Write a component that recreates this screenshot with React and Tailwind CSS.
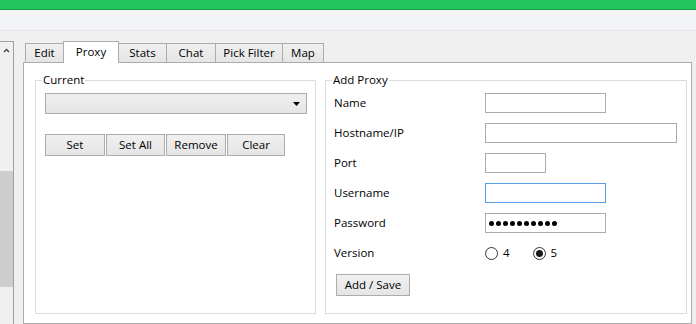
import { useState } from 'react'

const tabs = [
  { label: 'Edit', w: 'w-[39px]' },
  { label: 'Proxy', w: 'w-[56px]' },
  { label: 'Stats', w: 'w-[49px]' },
  { label: 'Chat', w: 'w-[50px]' },
  { label: 'Pick Filter', w: 'w-[68px]' },
  { label: 'Map', w: 'w-[42px]' },
]

const btn =
  'h-[22px] border border-[#acacac] bg-gradient-to-b from-[#f0f0f0] to-[#e5e5e5] flex items-center justify-center text-[11.5px] text-black'

function Field({ label, children }) {
  return (
    <div className="h-[20px] flex items-center pl-[8px]">
      <div className="w-[151px] text-[11.5px] text-black">{label}</div>
      {children}
    </div>
  )
}

function Radio({ checked, label }) {
  return (
    <div className="flex items-center">
      <span className="w-[13px] h-[13px] rounded-full border border-[#333] bg-white flex items-center justify-center">
        {checked && <span className="w-[7px] h-[7px] rounded-full bg-[#1a1a1a]" />}
      </span>
      <span className="ml-[5px] text-[11.5px] text-black">{label}</span>
    </div>
  )
}

export default function App() {
  const [active] = useState('Proxy')

  return (
    <div
      className="w-[696px] h-[324px] overflow-hidden bg-[#f0f0f0] flex flex-col"
      style={{ fontFamily: '"Open Sans", "Noto Sans", sans-serif' }}
    >
      <div className="h-[10px] shrink-0 bg-[#22c55e] border-b border-[#16a34a]" />
      <div className="h-[21px] shrink-0 bg-[#f3f4f6] border-b border-[#e5e7eb]" />

      <div className="flex flex-1 min-h-0">
        {/* scrollbar column */}
        <div className="w-[14px] mt-[10px] border-t border-r border-[#a0a0a0] flex flex-col">
          <div className="h-[17px] flex items-center pl-[3px]">
            <svg width="7" height="5" viewBox="0 0 7 5">
              <path d="M1 4 L3.5 1.5 L6 4" fill="none" stroke="#404040" strokeWidth="1.3" />
            </svg>
          </div>
          <div className="mt-[112px] h-[116px] w-[13px] bg-[#cdcdcd]" />
        </div>

        {/* tab control */}
        <div className="ml-[9px] mr-[4px] flex-1 flex flex-col pt-[10px]">
          <div className="h-[21px] flex items-end pl-[2px]">
            {tabs.map((t, i) => {
              const sel = t.label === active
              return (
                <div
                  key={t.label}
                  className={`${t.w} ${i > 0 ? '-ml-px' : ''} border border-b-0 border-[#acacac] flex items-center justify-center text-[11.5px] text-black ${
                    sel
                      ? 'h-[22px] -mb-px relative z-10 bg-white pb-[2px]'
                      : 'h-[19px] bg-gradient-to-b from-[#f0f0f0] to-[#e5e5e5]'
                  }`}
                >
                  {t.label}
                </div>
              )
            })}
          </div>

          <div className="flex-1 bg-white border border-[#acacac] flex items-start gap-[9px] pl-[11px] pr-[4px] pt-[9px]">
            {/* Current */}
            <fieldset className="w-[281px] h-[242px] border border-[#dcdcdc]">
              <legend className="ml-[6px] px-[1px] text-[11.5px] leading-[16px] text-black">Current</legend>
              <div className="mt-[5px] ml-[9px] w-[262px] h-[21px] border border-[#acacac] bg-gradient-to-b from-[#f0f0f0] to-[#e5e5e5] flex items-center justify-end pr-[6px]">
                <svg width="7" height="4" viewBox="0 0 7 4">
                  <polygon points="0,0 7,0 3.5,4" fill="#000" />
                </svg>
              </div>
              <div className="mt-[20px] ml-[9px] flex gap-[1px]">
                <button className={`${btn} w-[60px]`}>Set</button>
                <button className={`${btn} w-[59px]`}>Set All</button>
                <button className={`${btn} w-[60px]`}>Remove</button>
                <button className={`${btn} w-[58px]`}>Clear</button>
              </div>
            </fieldset>

            {/* Add Proxy */}
            <fieldset className="w-[362px] h-[242px] border border-[#dcdcdc]">
              <legend className="ml-[6px] px-[1px] text-[11.5px] leading-[16px] text-black">Add Proxy</legend>
              <div className="mt-[5px] flex flex-col gap-[10px]">
                <Field label="Name">
                  <div className="w-[121px] h-[20px] border border-[#ababab] bg-white" />
                </Field>
                <Field label="Hostname/IP">
                  <div className="w-[192px] h-[20px] border border-[#ababab] bg-white" />
                </Field>
                <Field label="Port">
                  <div className="w-[61px] h-[20px] border border-[#ababab] bg-white" />
                </Field>
                <Field label="Username">
                  <div className="w-[121px] h-[20px] border border-[#569de5] bg-white" />
                </Field>
                <Field label="Password">
                  <div className="w-[121px] h-[20px] border border-[#ababab] bg-white flex items-center gap-[2px] pl-[3px]">
                    {Array.from({ length: 10 }).map((_, i) => (
                      <span key={i} className="w-[5px] h-[5px] rounded-full bg-black" />
                    ))}
                  </div>
                </Field>
                <Field label="Version">
                  <div className="flex items-center gap-[23px]">
                    <Radio label="4" />
                    <Radio checked label="5" />
                  </div>
                </Field>
                <div className="pl-[10px] mt-[1px]">
                  <button className={`${btn} w-[74px]`}>Add / Save</button>
                </div>
              </div>
            </fieldset>
          </div>
        </div>
      </div>
    </div>
  )
}
